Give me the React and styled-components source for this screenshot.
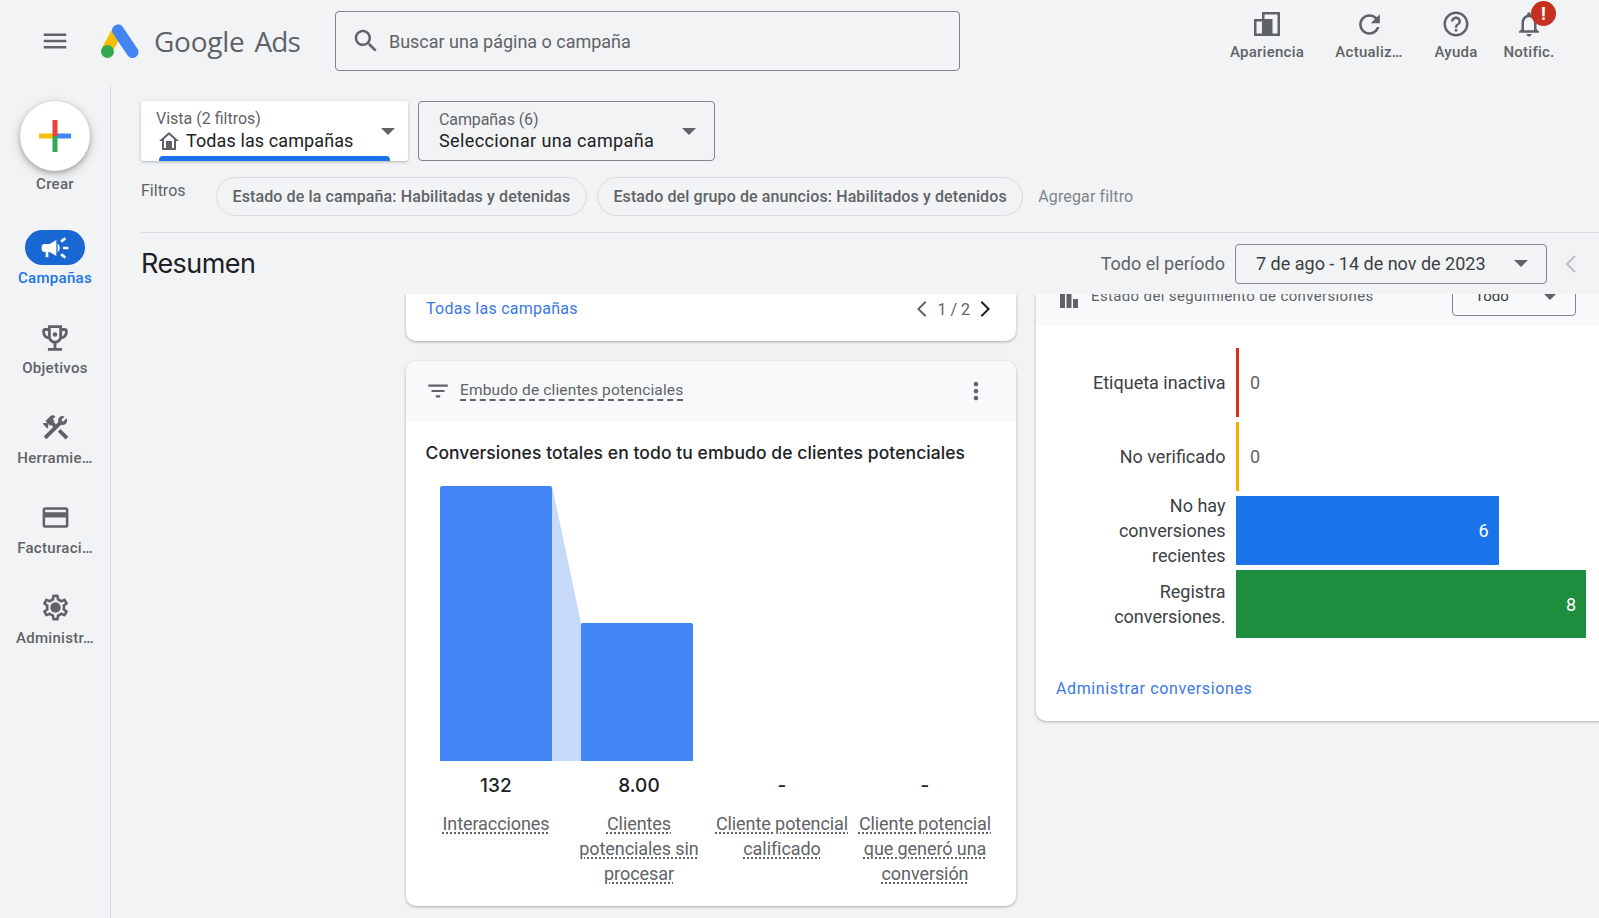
import React from "react";
import styled, { createGlobalStyle } from "styled-components";

const Global = createGlobalStyle`
  html, body { margin: 0; padding: 0; height: 100%; overflow: hidden; background: #f1f3f4; }
  * { box-sizing: border-box; }
  body { font-family: Roboto, "Liberation Sans", sans-serif; color: #202124; }
`;

const Page = styled.div`
  width: 1599px; height: 918px; display: flex; flex-direction: column; overflow: hidden; background: #f1f3f4;
`;

/* ---- top bar ---- */
const TopBar = styled.header`
  height: 86px; flex: none; display: flex; align-items: flex-start; position: relative;
`;
const MenuSlot = styled.div`
  width: 101px; height: 82px; flex: none; display: flex; align-items: center; justify-content: center; padding-left: 9px; color: #5f6368;
`;
const Brand = styled.div`
  width: 234px; flex: none; height: 82px; display: flex; align-items: center; gap: 15px;
`;
const Wordmark = styled.div`
  font-family: "Open Sans", sans-serif; font-size: 28px; font-weight: 500; color: #5f6368; white-space: nowrap; display: flex; gap: 10px;
`;
const WordPart = styled.span`
  letter-spacing: ${p => p.$spacing}px;
`;
const Search = styled.div`
  margin-top: 11px; width: 625px; height: 60px; border: 1px solid #80868b; border-radius: 4px; display: flex; align-items: center; padding-left: 15px; gap: 8px; color: #5f6368;
`;
const SearchText = styled.span`
  font-size: 18px; color: #5f6368; letter-spacing: -0.02px;
`;
const TopActions = styled.div`
  margin-left: auto; display: flex; padding: 9px 37px 0 0;
`;
const TopAction = styled.div`
  display: flex; flex-direction: column; align-items: center; width: ${p => p.$w}px; color: #5f6368; position: relative; flex: none;
`;
const TopIconSlot = styled.div`
  height: 30px; display: flex; align-items: center; justify-content: center;
`;
const TopLabel = styled.span`
  font-size: 15px; font-weight: 500; line-height: 20px; margin-top: 3px; letter-spacing: 0.25px; color: #5f6368; white-space: nowrap;
`;
const Badge = styled.span`
  position: absolute; top: -8px; left: 35px; width: 25px; height: 25px; border-radius: 50%; background: #c5301f; color: #fff; font-size: 18px; font-weight: 700; display: flex; align-items: center; justify-content: center;
`;

/* ---- body ---- */
const Body = styled.div`
  flex: 1; display: flex; min-height: 0;
`;
const Sidebar = styled.nav`
  width: 111px; flex: none; border-right: 1px solid #dadce0; display: flex; flex-direction: column; align-items: center; padding-top: 15px;
`;
const CreateCircle = styled.div`
  width: 70px; height: 70px; border-radius: 50%; background: #fff; display: flex; align-items: center; justify-content: center;
  box-shadow: 0 2px 4px rgba(60,64,67,.3), 0 3px 8px 2px rgba(60,64,67,.18);
`;
const NavItem = styled.div`
  width: 110px; height: 90px; display: flex; flex-direction: column; align-items: center; color: #5f6368; flex: none; padding-top: 8px;
`;
const NavPill = styled.div`
  width: 60px; height: 35px; border-radius: 18px; background: #1967d2; color: #fff; display: flex; align-items: center; justify-content: center; flex: none;
`;
const NavIconSlot = styled.div`
  width: 60px; height: 35px; display: flex; align-items: center; justify-content: center; flex: none;
`;
const NavLabel = styled.span`
  font-size: 15px; font-weight: 500; line-height: 20px; letter-spacing: 0.3px; margin-top: 3px; white-space: nowrap; color: ${p => p.$active ? "#1a73e8" : "#5f6368"};
`;
const NavList = styled.div`
  display: flex; flex-direction: column; margin-top: 28px;
`;

const Main = styled.main`
  flex: 1; min-width: 0; display: flex; flex-direction: column; padding-left: 30px;
`;
const SelectorRow = styled.div`
  display: flex; gap: 10px; padding-top: 15px; flex: none;
`;
const ViewCard = styled.div`
  width: 267px; height: 60px; background: #fff; border-radius: 3px; position: relative; padding: 9px 0 0 15px; overflow: hidden;
  box-shadow: 0 1px 3px rgba(60,64,67,.35);
`;
const SelectLabel = styled.div`
  font-size: 16px; line-height: 17px; color: #5f6368; letter-spacing: ${p => p.$spacing || 0}px;
`;
const SelectValue = styled.div`
  font-size: 18px; line-height: 24px; margin-top: 2px; color: #202124; display: flex; align-items: center; gap: 5px; white-space: nowrap; letter-spacing: ${p => p.$spacing || 0}px;
`;
const CampaignValue = styled(SelectValue)`
  margin-top: 1px;
`;
const HomeGlyph = styled.svg`
  flex: none; color: #5f6368; margin-left: 1px;
`;
const ViewUnderline = styled.span`
  position: absolute; left: 18px; bottom: 0; width: 231px; height: 5px; background: #1a73e8; border-radius: 4px 4px 0 0;
`;
const Caret = styled.span`
  position: absolute; top: ${p => p.$top}px; right: ${p => p.$right}px; border-left: 7px solid transparent; border-right: 7px solid transparent; border-top: 7px solid #5f6368;
`;
const CampaignSelect = styled.div`
  width: 297px; height: 60px; border: 1px solid #80868b; border-radius: 4px; padding: 9px 0 0 20px; position: relative;
`;
const FilterRow = styled.div`
  display: flex; align-items: center; height: 39px; margin-top: 16px; flex: none;
`;
const FiltersLabel = styled.span`
  width: 75px; flex: none; font-size: 16px; color: #5f6368; margin-top: -13px;
`;
const Chip = styled.span`
  height: 39px; border: 1px solid #dadce0; border-radius: 20px; padding: 0 15.5px; display: flex; align-items: center; font-size: 16px; font-weight: 500; letter-spacing: 0.11px; color: #5f6368; margin-right: 10px; white-space: nowrap; flex: none;
`;
const AddFilter = styled.span`
  font-size: 16px; color: #80868b; margin-left: 5px; white-space: nowrap; letter-spacing: 0.13px;
`;
const Divider = styled.div`
  height: 1px; background: #dadce0; margin-top: 16px; flex: none;
`;
const SummaryRow = styled.div`
  height: 61px; flex: none; display: flex; align-items: center; padding-right: 7px;
`;
const Title = styled.h1`
  margin: 0; font-family: Inter, Roboto, sans-serif; font-size: 27px; font-weight: 400; color: #202124; letter-spacing: -0.55px; margin-right: auto; margin-top: -1px;
`;
const PeriodLabel = styled.span`
  font-size: 18px; color: #5f6368; margin-right: 10px; white-space: nowrap;
`;
const DateBox = styled.div`
  width: 312px; height: 40px; border: 1px solid #80868b; border-radius: 4px; display: flex; align-items: center; padding-left: 20px; font-size: 18px; color: #3c4043; position: relative; white-space: nowrap;
`;
const BackChevron = styled.span`
  width: 40px; flex: none; display: flex; justify-content: center; color: #bdc1c6; margin-left: 5px;
`;

/* ---- scrolled content ---- */
const Viewport = styled.div`
  flex: 1; min-height: 0; overflow: hidden; display: flex; gap: 20px; padding-left: 265px; width: 1488px;
`;
const Column = styled.div`
  width: 610px; flex: none; display: flex; flex-direction: column; gap: 20px;
`;
const Card = styled.section`
  background: #fff; border-radius: 0 0 10px 10px; box-shadow: 0 1px 3px rgba(60,64,67,.4);
`;
const TopStub = styled(Card)`
  height: 47px; display: flex; align-items: flex-start; justify-content: space-between; padding: 5px 20px 0 20px;
`;
const Link = styled.a`
  color: #3b78e7; font-size: 16px; line-height: 20px; letter-spacing: 0.25px; white-space: nowrap;
`;
const Pager = styled.div`
  display: flex; align-items: center; gap: 2px; font-size: 16px; color: #5f6368; height: 20px;
`;
const PagerNext = styled.span`
  display: flex; color: #202124;
`;
const FunnelCard = styled(Card)`
  border-radius: 10px; height: 545px; overflow: hidden;
`;
const CardBand = styled.div`
  height: 60px; background: #f8f9fa; display: flex; align-items: center; padding: 0 26px 0 19px; color: #5f6368;
`;
const BandTitle = styled.span`
  margin-left: 9px; font-size: 15.5px; color: #5f6368; border-bottom: 2px dashed #5f6368; line-height: 18px; margin-right: auto; letter-spacing: 0.14px;
`;
const ChartTitle = styled.h2`
  margin: 21px 0 0 19.5px; font-family: Inter, Roboto, sans-serif; font-size: 17.5px; line-height: 22px; font-weight: 500; color: #202124; letter-spacing: 0.07px; white-space: nowrap;
`;
const FunnelSvg = styled.svg`
  display: block; margin: 22px 0 0 34px;
`;
const FunnelGrid = styled.div`
  display: grid; grid-template-columns: repeat(4, 143px); margin: 13px 0 0 18.5px;
`;
const FunnelCol = styled.div`
  display: flex; flex-direction: column; align-items: center; text-align: center;
`;
const FunnelValue = styled.div`
  font-family: Inter, Roboto, sans-serif; font-size: 19px; font-weight: 500; line-height: 24px; color: #202124; letter-spacing: 0.1px;
`;
const FunnelLabel = styled.div`
  margin-top: 13px; font-size: 18px; line-height: 25px; color: #5f6368; width: 143px; letter-spacing: -0.08px;
  text-decoration: underline dotted #5f6368; text-underline-offset: 2px; text-decoration-thickness: 1.5px;
`;

const ConvCard = styled(Card)`
  height: 427px; display: flex; flex-direction: column;
`;
const ConvBand = styled.div`
  height: 32px; background: #f8f9fa; display: flex; align-items: flex-start; padding-left: 24px; color: #5f6368; flex: none; position: relative; overflow: hidden;
`;
const ConvTitle = styled.span`
  font-size: 15px; margin: -7px 0 0 13px; line-height: 18px; letter-spacing: 0.36px; color: #5f6368; white-space: nowrap;
`;
const BandSelect = styled.div`
  position: absolute; left: 416px; top: -21px; width: 124px; height: 43px; border: 1px solid #80868b; border-radius: 4px; font-size: 15px; padding: 13px 0 0 22px; color: #3c4043;
`;
const Rows = styled.div`
  display: flex; flex-direction: column; gap: 5px; margin-top: 22px; flex: none;
`;
const ConvRow = styled.div`
  display: flex; align-items: center; height: ${p => p.$h}px;
`;
const RowLabel = styled.div`
  width: 200px; flex: none; padding: 0 10.5px 0 50px; text-align: right; font-size: 18px; line-height: 25px; color: #3c4043;
`;
const Bar = styled.div`
  height: 100%; background: ${p => p.$color}; flex: none; display: flex; align-items: center; justify-content: flex-end; padding-right: ${p => p.$slim ? 0 : 10}px; color: #fff; font-size: 18px;
`;
const ZeroValue = styled.span`
  margin-left: 11px; font-size: 18px; color: #5f6368;
`;
const ManageLink = styled(Link)`
  margin: 41px 0 0 20px; letter-spacing: 0.62px;
`;

const Icon = ({ d, size = 24, children }) => (
  <svg width={size} height={size} viewBox="0 0 24 24" fill="currentColor" style={{ flex: "none" }}>
    {d && <path d={d} />}
    {children}
  </svg>
);

const P = {
  menu: "M3 18h18v-2H3v2zm0-5h18v-2H3v2zm0-7v2h18V6H3z",
  search: "M15.5 14h-.79l-.28-.27C15.41 12.59 16 11.11 16 9.5 16 5.91 13.09 3 9.5 3S3 5.91 3 9.5 5.91 16 9.5 16c1.61 0 3.09-.59 4.23-1.57l.27.28v.79l5 4.99L20.49 19l-4.99-5zm-6 0C7.01 14 5 11.99 5 9.5S7.01 5 9.5 5 14 7.01 14 9.5 11.99 14 9.5 14z",
  help: "M11 18h2v-2h-2v2zm1-16C6.48 2 2 6.48 2 12s4.48 10 10 10 10-4.48 10-10S17.52 2 12 2zm0 18c-4.41 0-8-3.59-8-8s3.59-8 8-8 8 3.59 8 8-3.59 8-8 8zm0-14c-2.21 0-4 1.79-4 4h2c0-1.1.9-2 2-2s2 .9 2 2c0 2-3 1.75-3 5h2c0-2.25 3-2.5 3-5 0-2.21-1.79-4-4-4z",
  refresh: "M17.65 6.35C16.2 4.9 14.21 4 12 4c-4.42 0-7.99 3.58-7.99 8s3.57 8 7.99 8c3.73 0 6.84-2.55 7.73-6h-2.08c-.82 2.33-3.04 4-5.65 4-3.31 0-6-2.69-6-6s2.69-6 6-6c1.66 0 3.14.69 4.22 1.78L13 11h7V4l-2.35 2.35z",
  bell: "M12 22c1.1 0 2-.9 2-2h-4c0 1.1.9 2 2 2zm6-6v-5c0-3.07-1.63-5.64-4.5-6.32V4c0-.83-.67-1.5-1.5-1.5s-1.5.67-1.5 1.5v.68C7.64 5.36 6 7.92 6 11v5l-2 2v1h16v-1l-2-2zm-2 1H8v-6c0-2.48 1.51-4.5 4-4.5s4 2.02 4 4.5v6z",
  card: "M20 4H4c-1.11 0-1.99.89-1.99 2L2 18c0 1.11.89 2 2 2h16c1.11 0 2-.89 2-2V6c0-1.11-.89-2-2-2zm0 14H4v-6h16v6zm0-10H4V6h16v2z",
  gear: "M19.43 12.98c.04-.32.07-.64.07-.98 0-.34-.03-.66-.07-.98l2.11-1.65c.19-.15.24-.42.12-.64l-2-3.46c-.09-.16-.26-.25-.44-.25-.06 0-.12.01-.17.03l-2.49 1c-.52-.4-1.08-.73-1.69-.98l-.38-2.65C14.46 2.18 14.25 2 14 2h-4c-.25 0-.46.18-.49.42l-.38 2.65c-.61.25-1.17.59-1.69.98l-2.49-1c-.06-.02-.12-.03-.18-.03-.17 0-.34.09-.43.25l-2 3.46c-.13.22-.07.49.12.64l2.11 1.65c-.04.32-.07.65-.07.98 0 .33.03.66.07.98l-2.11 1.65c-.19.15-.24.42-.12.64l2 3.46c.09.16.26.25.44.25.06 0 .12-.01.17-.03l2.49-1c.52.4 1.08.73 1.69.98l.38 2.65c.03.24.24.42.49.42h4c.25 0 .46-.18.49-.42l.38-2.65c.61-.25 1.17-.59 1.69-.98l2.49 1c.06.02.12.03.18.03.17 0 .34-.09.43-.25l2-3.46c.12-.22.07-.49-.12-.64l-2.11-1.65zm-1.98-1.71c.04.31.05.52.05.73 0 .21-.02.43-.05.73l-.14 1.13.89.7 1.08.84-.7 1.21-1.27-.51-1.04-.42-.9.68c-.43.32-.84.56-1.25.73l-1.06.43-.16 1.13-.2 1.35h-1.4l-.19-1.35-.16-1.13-1.06-.43c-.43-.18-.83-.41-1.23-.71l-.91-.7-1.06.43-1.27.51-.7-1.21 1.08-.84.89-.7-.14-1.13c-.03-.31-.05-.54-.05-.74s.02-.43.05-.73l.14-1.13-.89-.7-1.08-.84.7-1.21 1.27.51 1.04.42.9-.68c.43-.32.84-.56 1.25-.73l1.06-.43.16-1.13.2-1.35h1.39l.19 1.35.16 1.13 1.06.43c.43.18.83.41 1.23.71l.91.7 1.06-.43 1.27-.51.7 1.21-1.07.85-.89.7.14 1.13zM12 8c-2.21 0-4 1.79-4 4s1.79 4 4 4 4-1.79 4-4-1.79-4-4-4z",
  trophy: "M19 5h-2V3H7v2H5c-1.1 0-2 .9-2 2v1c0 2.55 1.92 4.63 4.39 4.94.63 1.5 1.98 2.63 3.61 2.96V19H7v2h10v-2h-4v-3.1c1.63-.33 2.98-1.46 3.61-2.96C19.08 12.63 21 10.55 21 8V7c0-1.1-.9-2-2-2zM5 8V7h2v3.82C5.84 10.4 5 9.3 5 8zm7 6c-1.65 0-3-1.35-3-3V5h6v6c0 1.65-1.35 3-3 3zm7-6c0 1.3-.84 2.4-2 2.82V7h2v1z",
  tools: "M13.78 15.3L19.78 21.3L21.89 19.14L15.89 13.14L13.78 15.3ZM17.5 10c1.93 0 3.5-1.57 3.5-3.5 0-.58-.16-1.12-.41-1.6l-2.7 2.7-1.49-1.49 2.7-2.7c-.48-.25-1.02-.41-1.6-.41C15.57 3 14 4.57 14 6.5c0 .41.08.8.21 1.16l-1.85 1.85-1.78-1.78.71-.71-1.41-1.41L12 3.49c-1.17-1.17-3.07-1.17-4.24 0L4.22 7.03l1.41 1.41H2.81l-.71.71 3.54 3.54.71-.71V9.15l1.41 1.41.71-.71 1.78 1.78-7.41 7.41 2.12 2.12L16.34 9.79c.36.13.75.21 1.16.21z",
  campaign: "M18 11v2h4v-2h-4zm-2 6.61c.96.71 2.21 1.65 3.2 2.39.4-.53.8-1.07 1.2-1.6-.99-.74-2.24-1.68-3.2-2.4-.4.54-.8 1.08-1.2 1.61zM20.4 5.6c-.4-.53-.8-1.07-1.2-1.6-.99.74-2.24 1.68-3.2 2.4.4.53.8 1.07 1.2 1.6.96-.72 2.21-1.65 3.2-2.4zM4 9c-1.1 0-2 .9-2 2v2c0 1.1.9 2 2 2h1v4h2v-4h1l5 3V6L8 9H4zm11.5 3c0-1.33-.58-2.53-1.5-3.35v6.69c.92-.81 1.5-2.01 1.5-3.34z",
  filter: "M10 18h4v-2h-4v2zM3 6v2h18V6H3zm3 7h12v-2H6v2z",
  kebab: "M12 8c1.1 0 2-.9 2-2s-.9-2-2-2-2 .9-2 2 .9 2 2 2zm0 2c-1.1 0-2 .9-2 2s.9 2 2 2 2-.9 2-2-.9-2-2-2zm0 6c-1.1 0-2 .9-2 2s.9 2 2 2 2-.9 2-2-.9-2-2-2z",
  left: "M15.41 5.41L14 4l-8 8 8 8 1.41-1.41L8.83 12z",
  right: "M8.59 5.41L10 4l8 8-8 8-1.41-1.41L15.17 12z",
};

const Logo = () => (
  <svg width="38" height="34" viewBox="0 0 38 34" style={{ flex: "none" }}>
    <path d="M17 6 L5.5 27" stroke="#fbbc04" strokeWidth="11" />
    <path d="M17 6.5 L31.5 28" stroke="#4285f4" strokeWidth="12" strokeLinecap="round" />
    <circle cx="6.5" cy="27.5" r="6.5" fill="#34a853" />
  </svg>
);

const AppearanceIcon = () => (
  <svg width="26" height="24" viewBox="0 0 26 24" fill="none" style={{ flex: "none" }}>
    <rect x="9.25" y="1.25" width="15.5" height="21.5" stroke="#5f6368" strokeWidth="2.5" />
    <rect x="1.25" y="8.25" width="8" height="14.5" stroke="#5f6368" strokeWidth="2.5" />
    <rect x="9" y="7" width="9.5" height="16" fill="#5f6368" />
  </svg>
);

const HomeIcon = () => (
  <HomeGlyph width="24" height="24" viewBox="0 0 24 24" fill="currentColor">
    <path fillRule="evenodd" d="M12 3L2 12h3v9h14v-9h3L12 3zM12 5.69l5 4.5V19H7v-8.81l5-4.5zM9 12h6v7H9z" />
  </HomeGlyph>
);

const Plus = () => (
  <svg width="32" height="32" viewBox="0 0 32 32" style={{ flex: "none" }}>
    <rect x="0" y="13.5" width="16" height="5" fill="#fbbc04" />
    <rect x="16" y="13.5" width="16" height="5" fill="#4285f4" />
    <rect x="13.5" y="0" width="5" height="16" fill="#ea4335" />
    <rect x="13.5" y="16" width="5" height="16" fill="#34a853" />
  </svg>
);

const BarsIcon = () => (
  <svg width="18" height="14" viewBox="0 0 18 14" fill="currentColor" style={{ flex: "none" }}>
    <rect x="0" y="0" width="5" height="14" />
    <rect x="6.5" y="0" width="5" height="14" />
    <rect x="13" y="5" width="5" height="9" />
  </svg>
);

const nav = [
  { label: "Objetivos", icon: P.trophy, dot: true, size: 34 },
  { label: "Herramie…", icon: P.tools, size: 31 },
  { label: "Facturaci…", icon: P.card, size: 31 },
  { label: "Administr…", icon: P.gear, size: 31 },
];

const funnel = [
  { value: "132", label: "Interacciones" },
  { value: "8.00", label: "Clientes potenciales sin procesar" },
  { value: "-", label: "Cliente potencial calificado" },
  { value: "-", label: "Cliente potencial que generó una conversión" },
];

const conv = [
  { label: "Etiqueta inactiva", value: 0, color: "#d93025", h: 69 },
  { label: "No verificado", value: 0, color: "#f9ab00", h: 69 },
  { label: "No hay conversiones recientes", value: 6, color: "#1a73e8", h: 69 },
  { label: "Registra conversiones.", value: 8, color: "#1e8e3e", h: 68 },
];

export default function App() {
  return (
    <Page>
      <Global />
      <TopBar>
        <MenuSlot><Icon d={P.menu} size={30} /></MenuSlot>
        <Brand>
          <Logo />
          <Wordmark><WordPart $spacing={-0.25}>Google</WordPart><WordPart $spacing={-0.9}>Ads</WordPart></Wordmark>
        </Brand>
        <Search>
          <Icon d={P.search} size={30} />
          <SearchText>Buscar una página o campaña</SearchText>
        </Search>
        <TopActions>
          <TopAction $w={110}><TopIconSlot><AppearanceIcon /></TopIconSlot><TopLabel>Apariencia</TopLabel></TopAction>
          <TopAction $w={94}><TopIconSlot><Icon d={P.refresh} size={31} /></TopIconSlot><TopLabel>Actualiz…</TopLabel></TopAction>
          <TopAction $w={80}><TopIconSlot><Icon d={P.help} size={30} /></TopIconSlot><TopLabel>Ayuda</TopLabel></TopAction>
          <TopAction $w={66}>
            <TopIconSlot><Icon d={P.bell} size={30} /></TopIconSlot>
            <TopLabel>Notific.</TopLabel>
            <Badge>!</Badge>
          </TopAction>
        </TopActions>
      </TopBar>
      <Body>
        <Sidebar>
          <CreateCircle><Plus /></CreateCircle>
          <NavLabel>Crear</NavLabel>
          <NavList>
            <NavItem>
              <NavPill><Icon d={P.campaign} size={32} /></NavPill>
              <NavLabel $active>Campañas</NavLabel>
            </NavItem>
            {nav.map(n => (
              <NavItem key={n.label}>
                <NavIconSlot>
                  <Icon d={n.icon} size={n.size}>{n.dot && <circle cx="12" cy="9.5" r="1.6" />}</Icon>
                </NavIconSlot>
                <NavLabel>{n.label}</NavLabel>
              </NavItem>
            ))}
          </NavList>
        </Sidebar>
        <Main>
          <SelectorRow>
            <ViewCard>
              <SelectLabel>Vista (2 filtros)</SelectLabel>
              <SelectValue $spacing={0.1}><HomeIcon />Todas las campañas</SelectValue>
              <Caret $top={27} $right={13} />
              <ViewUnderline />
            </ViewCard>
            <CampaignSelect>
              <SelectLabel $spacing={-0.1}>Campañas (6)</SelectLabel>
              <CampaignValue $spacing={0.37}>Seleccionar una campaña</CampaignValue>
              <Caret $top={26} $right={18} />
            </CampaignSelect>
          </SelectorRow>
          <FilterRow>
            <FiltersLabel>Filtros</FiltersLabel>
            <Chip>Estado de la campaña: Habilitadas y detenidas</Chip>
            <Chip>Estado del grupo de anuncios: Habilitados y detenidos</Chip>
            <AddFilter>Agregar filtro</AddFilter>
          </FilterRow>
          <Divider />
          <SummaryRow>
            <Title>Resumen</Title>
            <PeriodLabel>Todo el período</PeriodLabel>
            <DateBox>
              7 de ago - 14 de nov de 2023
              <Caret $top={15} $right={18} />
            </DateBox>
            <BackChevron><Icon d={P.left} size={26} /></BackChevron>
          </SummaryRow>
          <Viewport>
            <Column>
              <TopStub>
                <Link>Todas las campañas</Link>
                <Pager>
                  <Icon d={P.left} size={24} />
                  <span>1 / 2</span>
                  <PagerNext><Icon d={P.right} size={24} /></PagerNext>
                </Pager>
              </TopStub>
              <FunnelCard>
                <CardBand>
                  <Icon d={P.filter} size={26} />
                  <BandTitle>Embudo de clientes potenciales</BandTitle>
                  <Icon d={P.kebab} size={28} />
                </CardBand>
                <ChartTitle>Conversiones totales en todo tu embudo de clientes potenciales</ChartTitle>
                <FunnelSvg width="253" height="275" viewBox="0 0 253 275">
                  <polygon points="112,0 141,137 141,275 112,275" fill="#c6d9f9" />
                  <path d="M0 2a2 2 0 0 1 2-2h108a2 2 0 0 1 2 2v273H0z" fill="#4285f4" />
                  <path d="M141 139a2 2 0 0 1 2-2h108a2 2 0 0 1 2 2v136H141z" fill="#4285f4" />
                </FunnelSvg>
                <FunnelGrid>
                  {funnel.map(f => (
                    <FunnelCol key={f.label}>
                      <FunnelValue>{f.value}</FunnelValue>
                      <FunnelLabel>{f.label}</FunnelLabel>
                    </FunnelCol>
                  ))}
                </FunnelGrid>
              </FunnelCard>
            </Column>
            <Column>
              <ConvCard>
                <ConvBand>
                  <BarsIcon />
                  <ConvTitle>Estado del seguimiento de conversiones</ConvTitle>
                  <BandSelect>Todo<Caret $top={19} $right={18} /></BandSelect>
                </ConvBand>
                <Rows>
                  {conv.map(c => (
                    <ConvRow key={c.label} $h={c.h}>
                      <RowLabel>{c.label}</RowLabel>
                      <Bar $color={c.color} $slim={!c.value} style={{ width: c.value ? (350 * c.value) / 8 : 3 }}>
                        {c.value > 0 && c.value}
                      </Bar>
                      {c.value === 0 && <ZeroValue>0</ZeroValue>}
                    </ConvRow>
                  ))}
                </Rows>
                <ManageLink>Administrar conversiones</ManageLink>
              </ConvCard>
            </Column>
          </Viewport>
        </Main>
      </Body>
    </Page>
  );
}
